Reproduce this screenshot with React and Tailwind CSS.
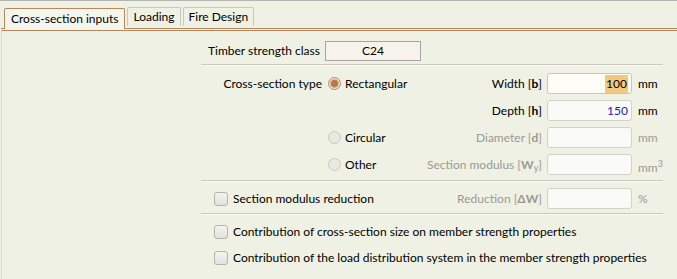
import React from "react";

const font = { fontFamily: "Lato, 'Open Sans', sans-serif" };

function Tab({ label, active }) {
  return active ? (
    <div className="relative z-10 -mb-[1px] h-[21px] px-[6px] flex items-center border border-b-0 border-[#b8875c] rounded-t-[2px] bg-[#f4f5ec] text-[12px] text-black">
      {label}
    </div>
  ) : (
    <div className="h-[19px] mb-[2px] px-[5px] flex items-center border border-b-0 border-[#c9c9c0] rounded-t-[2px] bg-[#eef1e4] text-[12px] text-black">
      {label}
    </div>
  );
}

function Radio({ checked, disabled }) {
  return (
    <span
      className={
        "w-[13px] h-[13px] rounded-full border flex items-center justify-center shrink-0 " +
        (disabled
          ? "border-[#c8c8c0] bg-[#e9e9e2]"
          : "border-[#b08a66] bg-[#f0e6d8]")
      }
    >
      {checked && <span className="w-[7px] h-[7px] rounded-full bg-[#b8794a] ring-1 ring-[#d9b08c]" />}
    </span>
  );
}

function Check() {
  return (
    <span className="w-[14px] h-[14px] rounded-[3px] border border-[#b4b4ad] bg-gradient-to-b from-[#f4f4f0] to-[#e2e2dc] shrink-0" />
  );
}

function Field({ children, focused }) {
  return (
    <div
      className={
        "w-[85px] h-[21px] rounded-[3px] border flex items-center justify-end pr-[3px] text-[12px] " +
        (focused ? "border-[#dcc0a4] bg-[#fdfcf7]" : "border-[#d2d2ca] bg-[#fafaf6]")
      }
    >
      {children}
    </div>
  );
}

function Row({ left, label, dim, field, unit }) {
  return (
    <div className="flex items-center h-[21px]">
      <div className="w-[215px] flex items-center">{left}</div>
      <div className={"w-[124px] text-right pr-[5px] text-[12px] " + (dim ? "text-[#9a9a94]" : "text-black")}>
        {label}
      </div>
      {field}
      <div className={"pl-[6px] text-[12px] " + (dim ? "text-[#9a9a94]" : "text-black")}>{unit}</div>
    </div>
  );
}

function Sep() {
  return <div className="ml-[-7px] h-[2px] border-t border-[#c8c8c0] border-b border-b-[#fafaf4]" />;
}

export default function App() {
  return (
    <div className="w-[677px] h-[279px] bg-[#eef1e4] border-t border-[#b4b4b0] overflow-hidden" style={font}>
      {/* tab strip */}
      <div className="flex items-end gap-[2px] pl-[4px] pt-[6px]">
        <Tab label="Cross-section inputs" active />
        <Tab label="Loading" />
        <Tab label="Fire Design" />
      </div>

      {/* panel */}
      <div className="h-[260px] border-t-[3px] border-double border-[#b8875c] ml-[1px] border-l border-l-[#d8d8d0]">
        <div className="ml-[206px] w-[455px]">
          <div className="flex items-center pt-[10px]">
            <span className="w-[117px] text-[12px] text-black whitespace-nowrap">Timber strength class</span>
            <div className="w-[96px] h-[20px] border border-[#a4a4a0] bg-[#f7f3ec] flex items-center justify-center text-[12px]">
              C24
            </div>
          </div>

          <div className="mt-[3px]">
            <Sep />
          </div>

          <div className="mt-[7px] flex flex-col gap-[6px]">
            <Row
              left={
                <>
                  <span className="w-[120px] text-right pr-[6px] text-[12px]">Cross-section type</span>
                  <Radio checked />
                  <span className="ml-[4px] text-[12px]">Rectangular</span>
                </>
              }
              label={<>Width [<b>b</b>]</>}
              field={
                <Field focused>
                  <span className="bg-[#f0c97e] px-[1px]">100</span>
                </Field>
              }
              unit="mm"
            />
            <Row
              label={<>Depth [<b>h</b>]</>}
              field={<Field><span className="text-[#2222bb]">150</span></Field>}
              unit="mm"
            />
            <Row
              left={
                <>
                  <span className="w-[120px]" />
                  <Radio disabled />
                  <span className="ml-[4px] text-[12px]">Circular</span>
                </>
              }
              dim
              label={<>Diameter [<b>d</b>]</>}
              field={<Field />}
              unit="mm"
            />
            <Row
              left={
                <>
                  <span className="w-[120px]" />
                  <Radio disabled />
                  <span className="ml-[4px] text-[12px]">Other</span>
                </>
              }
              dim
              label={
                <>
                  Section modulus [<b>W</b>
                  <sub className="text-[9px]">y</sub>]
                </>
              }
              field={<Field />}
              unit={
                <span className="relative top-[3px]">
                  mm<sup className="text-[9px]">3</sup>
                </span>
              }
            />
          </div>

          <div className="mt-[5px]">
            <Sep />
          </div>

          <div className="mt-[6px]">
            <Row
              left={
                <>
                  <span className="ml-[6px]" />
                  <Check />
                  <span className="ml-[5px] text-[12px]">Section modulus reduction</span>
                </>
              }
              dim
              label={<>Reduction [<b>ΔW</b>]</>}
              field={<Field />}
              unit="%"
            />
          </div>

          <div className="mt-[4px]">
            <Sep />
          </div>

          <div className="mt-[9px] ml-[6px] flex flex-col gap-[11px]">
            <div className="flex items-center h-[15px]">
              <Check />
              <span className="ml-[5px] text-[12px]">Contribution of cross-section size on member strength properties</span>
            </div>
            <div className="flex items-center h-[15px]">
              <Check />
              <span className="ml-[5px] text-[12px] whitespace-nowrap">
                Contribution of the load distribution system in the member strength properties
              </span>
            </div>
          </div>
        </div>
      </div>
    </div>
  );
}
